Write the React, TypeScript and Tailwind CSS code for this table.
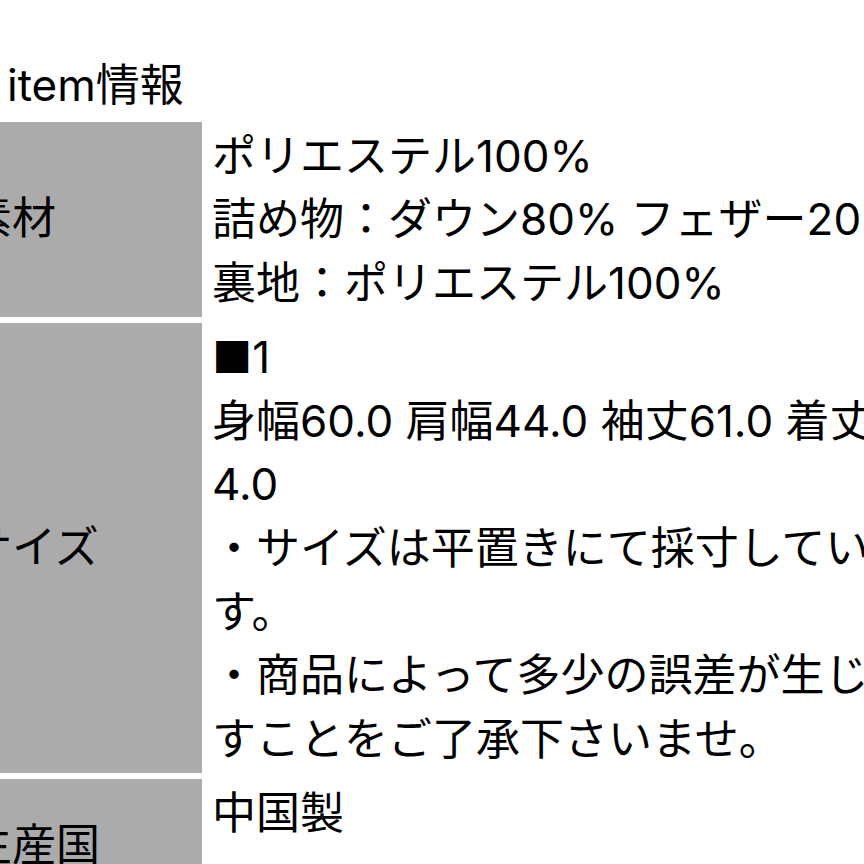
import React from "react";

type Row = {
  label: string;
  lines: string[];
  className: string;
};

const rows: Row[] = [
  {
    label: "素材",
    lines: ["ポリエステル100%", "詰め物：ダウン80% フェザー20%", "裏地：ポリエステル100%"],
    className: "pt-[3px] pb-px",
  },
  {
    label: "サイズ",
    lines: [
      "■1",
      "身幅60.0 肩幅44.0 袖丈61.0 着丈64.0",
      "・サイズは平置きにて採寸しています。",
      "・商品によって多少の誤差が生じますことをご了承下さいませ。",
    ],
    className: "pt-[3px] pb-px",
  },
  {
    label: "生産国",
    lines: ["中国製"],
    className: "pt-[3px] h-[134px]",
  },
];

export default function App(): JSX.Element {
  return (
    <div className="w-[864px] h-[864px] overflow-hidden bg-white text-black font-['Inter','Noto_Sans_CJK_JP',sans-serif] text-[44px] leading-[63.7px]">
      <div className="pt-[54px] pl-[7px] mb-[4px]">item情報</div>

      <div className="-ml-[30px] grid grid-cols-[232px_720px] gap-y-[6px]">
        {rows.map((row) => (
          <React.Fragment key={row.label}>
            <div className="bg-[#ababab] flex items-center">
              <span className="-ml-[2px]">{row.label}</span>
            </div>
            <div className={`pl-[10px] break-all ${row.className}`}>
              {row.lines.map((line, i) => (
                <div key={i}>{line}</div>
              ))}
            </div>
          </React.Fragment>
        ))}
      </div>
    </div>
  );
}
